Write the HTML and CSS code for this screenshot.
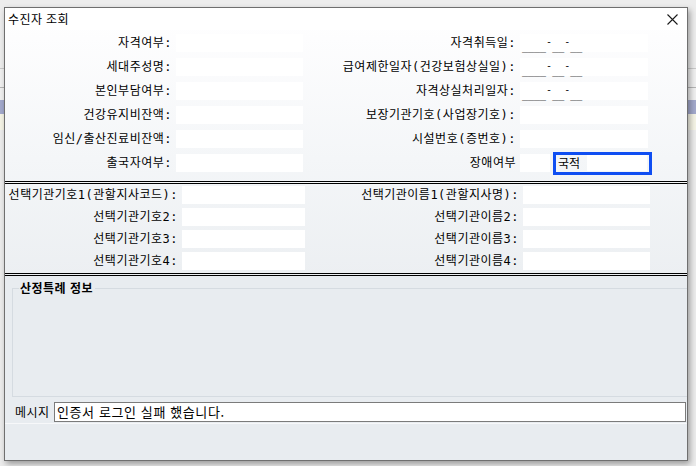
FILE: index.html
```html
<!DOCTYPE html>
<html lang="ko">
<head>
<meta charset="utf-8">
<title>수진자 조회</title>
<link rel="stylesheet" href="styles.css">
</head>
<body>
<div class="desk">
  <div class="dialog">
    <div class="titlebar">
      <span class="title">수진자 조회</span>
      <svg class="close" width="11" height="11" viewBox="0 0 11 11"><path d="M0.5 0.5 L10.5 10.5 M10.5 0.5 L0.5 10.5" stroke="#1a1a1a" stroke-width="1.1" fill="none"/></svg>
    </div>

    <div class="form form1">
      <div class="lbl">자격여부:</div><div class="fld"></div>
      <div class="lbl">자격취득일:</div><div class="fld date">____<span class="dash">-</span>__<span class="dash">-</span>__</div>

      <div class="lbl">세대주성명:</div><div class="fld"></div>
      <div class="lbl">급여제한일자(건강보험상실일):</div><div class="fld date">____<span class="dash">-</span>__<span class="dash">-</span>__</div>

      <div class="lbl">본인부담여부:</div><div class="fld"></div>
      <div class="lbl">자격상실처리일자:</div><div class="fld date">____<span class="dash">-</span>__<span class="dash">-</span>__</div>

      <div class="lbl">건강유지비잔액:</div><div class="fld"></div>
      <div class="lbl">보장기관기호(사업장기호):</div><div class="fld"></div>

      <div class="lbl">임신/출산진료비잔액:</div><div class="fld"></div>
      <div class="lbl">시설번호(증번호):</div><div class="fld"></div>

      <div class="lbl">출국자여부:</div><div class="fld"></div>
      <div class="lbl">장애여부</div>
      <div class="combo">
        <div class="fld small"></div>
        <div class="nation"><span class="nlbl">국적</span><div class="fld ninput"></div></div>
      </div>
    </div>

    <div class="sep sep1"></div>

    <div class="form form2">
      <div class="lbl">선택기관기호1(관할지사코드):</div><div class="fld"></div>
      <div class="lbl">선택기관이름1(관할지사명):</div><div class="fld"></div>

      <div class="lbl">선택기관기호2:</div><div class="fld"></div>
      <div class="lbl">선택기관이름2:</div><div class="fld"></div>

      <div class="lbl">선택기관기호3:</div><div class="fld"></div>
      <div class="lbl">선택기관이름3:</div><div class="fld"></div>

      <div class="lbl">선택기관기호4:</div><div class="fld"></div>
      <div class="lbl">선택기관이름4:</div><div class="fld"></div>
    </div>

    <div class="sep sep2"></div>

    <div class="lower">
      <div class="group"><span class="legend">산정특례 정보</span></div>
      <div class="msgrow">
        <span class="msglbl">메시지</span>
        <div class="msgbox">인증서 로그인 실패 했습니다.</div>
      </div>
      <div class="footer"></div>
    </div>
  </div>
</div>
</body>
</html>
```

FILE: styles.css
```css
* { box-sizing: border-box; }

html, body {
  margin: 0;
  padding: 0;
}

body {
  width: 696px;
  height: 466px;
  overflow: hidden;
  font-family: "Noto Sans CJK KR", "Noto Sans", sans-serif;
  font-size: 12px;
  color: #000;
}

.desk {
  width: 696px;
  height: 466px;
  padding: 7px 0 0 4px;
  background: linear-gradient(to bottom,
    #ededed 0, #ededed 68px,
    #c9c9c9 68px, #c9c9c9 69px,
    #f0f0f0 69px, #f0f0f0 87px,
    #b5b5b5 87px, #b5b5b5 88px,
    #f0f0f0 88px, #f0f0f0 100px,
    #a3a9cc 100px, #a3a9cc 114px,
    #f5f4e6 114px, #f5f4e6 130px,
    #ececec 130px, #ececec 466px);
}

.dialog {
  width: 684px;
  height: 454px;
  border: 1px solid #6f6f6f;
  display: flex;
  flex-direction: column;
  background: linear-gradient(to bottom, #ffffff 0, #fdfdfe 30px, #f4f6f8 150px, #eceff2 268px);
  box-shadow: 2px 3px 6px rgba(0, 0, 0, 0.35);
}

/* title bar */
.titlebar {
  height: 22px;
  display: flex;
  align-items: center;
  justify-content: space-between;
  padding: 0 9px 0 3px;
  background: #fff;
}

.title {
  font-size: 12px;
  line-height: 14px;
  letter-spacing: 0.4px;
}

.close {
  display: block;
  margin-top: 1px;
}

/* grids */
.form {
  display: grid;
  grid-auto-rows: 18px;
  column-gap: 4px;
  align-items: center;
}

.form1 {
  grid-template-columns: 167px 127px 209px 128px;
  row-gap: 6px;
  padding-top: 4px;
}

.form2 {
  grid-template-columns: 173px 123px 210px 127px;
  row-gap: 4px;
  margin-top: 2px;
}

.lbl {
  text-align: right;
  white-space: nowrap;
  line-height: 18px;
  font-family: "DejaVu Sans Mono", "Noto Sans CJK KR", monospace;
  font-size: 12px;
  letter-spacing: 0.5px;
}

.fld {
  height: 18px;
  background: #fff;
  line-height: 18px;
}

.date {
  padding-left: 2px;
  color: #111;
  font-family: "DejaVu Sans Mono", monospace;
  font-size: 10px;
  line-height: 16px;
}

.dash {
  vertical-align: 5px;
}

.combo {
  display: flex;
  align-items: center;
  gap: 3px;
  height: 18px;
  overflow: visible;
}

.fld.small {
  width: 30px;
  flex: none;
}

.nation {
  flex: none;
  width: 99px;
  height: 23px;
  border: 3px solid #0f4ef2;
  display: flex;
  align-items: center;
  padding: 0 2px 0 2px;
  gap: 4px;
}

.nlbl {
  line-height: 16px;
  width: 25px;
}

.fld.ninput {
  flex: 1;
  height: 16px;
}

/* separators */
.sep {
  height: 3px;
  border-top: 3px double #000;
}

.sep1 { margin-top: 9px; }
.sep2 { margin-top: 3px; }

/* lower panel */
.lower {
  flex: 1;
  display: flex;
  flex-direction: column;
  background: #e8ecf0;
}

.group {
  position: relative;
  margin: 12px 0 0 7px;
  height: 109px;
  border: 1px solid #d5dbe1;
  border-right: none;
}

.legend {
  position: absolute;
  top: -9px;
  left: 6px;
  padding: 0 2px 0 1px;
  background: #e8ecf0;
  font-weight: bold;
  line-height: 16px;
  letter-spacing: 0.5px;
}

.msgrow {
  display: flex;
  align-items: center;
  margin-top: 5px;
  padding-left: 10px;
  padding-right: 1px;
  height: 20px;
}

.msglbl {
  width: 39px;
  flex: none;
  line-height: 18px;
  letter-spacing: 0.5px;
}

.msgbox {
  flex: 1;
  height: 20px;
  background: #fff;
  border: 1px solid #7b7b7b;
  line-height: 18px;
  padding-left: 2px;
  font-size: 13px;
  letter-spacing: 0.6px;
}

.footer {
  flex: 1;
  margin-top: 1px;
  border-top: 1px solid #f7f8fa;
}
```
